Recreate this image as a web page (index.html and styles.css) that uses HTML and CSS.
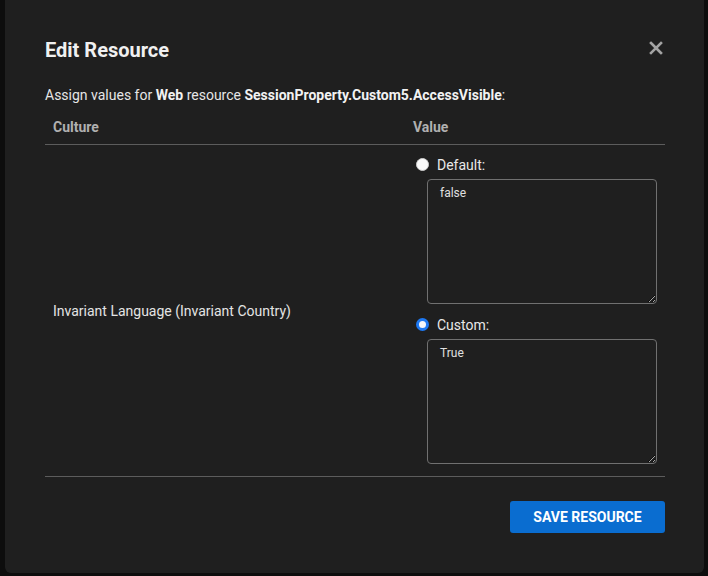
FILE: index.html
```html
<!DOCTYPE html>
<html lang="en">
<head>
<meta charset="utf-8">
<title>Edit Resource</title>
<link rel="stylesheet" href="styles.css">
</head>
<body>
<div class="backdrop">
  <div class="modal">
    <div class="modal-header">
      <h2 class="modal-title">Edit Resource</h2>
      <button class="close" aria-label="Close">
        <svg width="14" height="14" viewBox="0 0 14 14"><path d="M2 2 L12 12 M12 2 L2 12" stroke="#a3a3a3" stroke-width="2.6" stroke-linecap="square"/></svg>
      </button>
    </div>
    <p class="intro">Assign values for <b>Web</b> resource <b>SessionProperty.Custom5.AccessVisible</b>:</p>
    <table class="res-table">
      <thead>
        <tr><th class="col-culture">Culture</th><th class="col-value">Value</th></tr>
      </thead>
      <tbody>
        <tr>
          <td class="culture">Invariant Language (Invariant Country)</td>
          <td class="value">
            <label class="opt"><input type="radio" name="v" class="radio"><span>Default:</span></label>
            <textarea class="ta" readonly>false</textarea>
            <label class="opt opt-second"><input type="radio" name="v" class="radio" checked><span>Custom:</span></label>
            <textarea class="ta">True</textarea>
          </td>
        </tr>
      </tbody>
    </table>
    <div class="actions">
      <button class="save">SAVE RESOURCE</button>
    </div>
  </div>
</div>
</body>
</html>
```
FILE: styles.css
```css
html, body {
  margin: 0;
  padding: 0;
  background: #0d0d0d;
  height: 576px;
  overflow: hidden;
  font-family: Roboto, "Liberation Sans", Arial, sans-serif;
}
.backdrop {
  padding-left: 5px;
}
.modal {
  box-sizing: border-box;
  width: 699px;
  height: 573px;
  background: #1f1f1f;
  border-radius: 0 0 6px 6px;
  padding: 38px 39px 0 40px;
  color: #e8e8e8;
}
.modal-header {
  display: flex;
  justify-content: space-between;
  align-items: flex-start;
  height: 24px;
}
.modal-title {
  margin: 0;
  font-size: 20px;
  line-height: 24px;
  font-weight: 700;
  color: #f0f0f0;
}
.close {
  background: none;
  border: 0;
  padding: 0;
  margin: 2px 1px 0 0;
  width: 16px;
  height: 16px;
  display: flex;
  align-items: center;
  justify-content: center;
}
.intro {
  margin: 23px 0 5px;
  font-size: 14px;
  line-height: 20px;
  color: #e6e6e6;
}
.intro b { color: #f2f2f2; }
.res-table {
  width: 620px;
  border-collapse: collapse;
  table-layout: fixed;
}
.res-table th {
  text-align: left;
  font-size: 14px;
  line-height: 20px;
  font-weight: 700;
  color: #b0b0b0;
  padding: 7px 8px;
  border-bottom: 1px solid #5c5c5c;
}
.col-culture { width: 344px; }
.res-table td {
  border-bottom: 1px solid #5c5c5c;
  font-size: 14px;
  line-height: 20px;
  color: #e4e4e4;
}
.culture {
  padding: 0 8px;
  vertical-align: middle;
}
.value {
  padding: 10px 8px 12px 0;
  vertical-align: top;
}
.opt {
  display: flex;
  align-items: center;
  height: 20px;
  font-size: 14px;
  color: #e8e8e8;
}
.opt-second { margin-top: 11px; }
.radio {
  appearance: none;
  -webkit-appearance: none;
  box-sizing: border-box;
  width: 13px;
  height: 13px;
  margin: 0 8px 2px 11px;
  border-radius: 50%;
  background: #fafafa;
  border: 1px solid #d0d0d0;
}
.radio:checked {
  border: 3px solid #1d78f2;
  background: #f4f6fa;
}
.ta {
  display: block;
  box-sizing: border-box;
  width: 230px;
  height: 125px;
  margin: 4px 0 0 22px;
  padding: 5px 12px;
  background: #1f1f1f;
  border: 1px solid #707070;
  border-radius: 4px;
  color: #e0e0e0;
  font-family: Roboto, "Liberation Sans", Arial, sans-serif;
  font-size: 12px;
  line-height: 16px;
  outline: none;
}
.actions {
  display: flex;
  justify-content: flex-end;
  width: 620px;
  margin-top: 24px;
}
.save {
  width: 155px;
  height: 32px;
  border: 0;
  border-radius: 3px;
  background: #0a6dd0;
  color: #ffffff;
  font-family: Roboto, "Liberation Sans", Arial, sans-serif;
  font-size: 14px;
  font-weight: 700;
  padding: 0;
}
```
